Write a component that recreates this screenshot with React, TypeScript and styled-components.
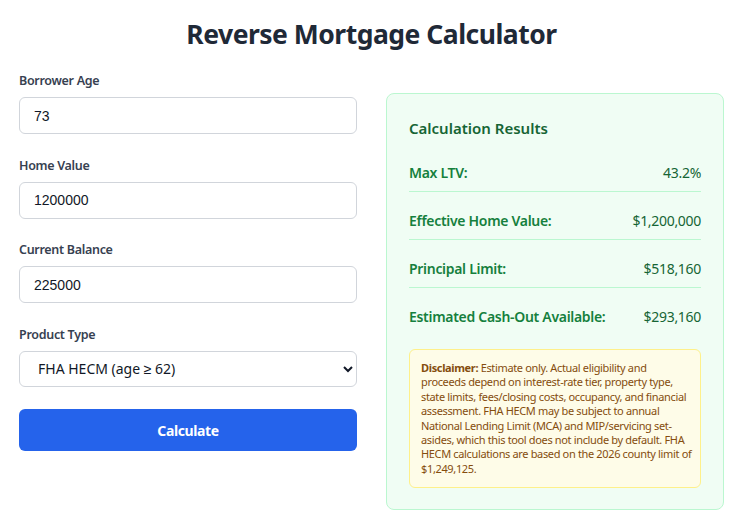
import React from "react";
import styled, { createGlobalStyle } from "styled-components";

const Global = createGlobalStyle`
  html, body { margin: 0; padding: 0; background: #ffffff; }
  body { font-family: "Noto Sans", "Open Sans", sans-serif; color: #1f2937; }
  * { box-sizing: border-box; }
`;

const Page = styled.div`
  padding: 0 12px 0 19px;
`;

const Title = styled.h1`
  margin: 0;
  padding-top: 17px;
  height: 72px;
  font-size: 26.5px;
  line-height: 34px;
  font-weight: 700;
  letter-spacing: -0.5px;
  text-align: center;
  color: #1f2937;
`;

const Grid = styled.div`
  display: grid;
  grid-template-columns: 338px 338px;
  column-gap: 29px;
  align-items: start;
`;

const Form = styled.div`
  display: flex;
  flex-direction: column;
`;

const Field = styled.div`
  display: flex;
  flex-direction: column;
  gap: 7px;
  margin-bottom: 22.6px;
`;

const Label = styled.label`
  font-size: 12.5px;
  line-height: 18px;
  font-weight: 600;
  letter-spacing: -0.3px;
  color: #374151;
`;

const Input = styled.input`
  height: 37px;
  width: 100%;
  padding: 0 14px;
  border: 1px solid #d1d5db;
  border-radius: 6px;
  font-family: "Liberation Sans", Arial, sans-serif;
  font-size: 14px;
  color: #111827;
  background: #fff;
  outline: none;
`;

const Select = styled.select`
  height: 36px;
  width: 100%;
  padding: 0 10px 0 14px;
  border: 1px solid #d1d5db;
  border-radius: 6px;
  font-family: "Noto Sans", sans-serif;
  font-size: 14px;
  color: #111827;
  background: #fff;
  outline: none;
`;

const Button = styled.button`
  height: 42px;
  width: 100%;
  border: none;
  border-radius: 6px;
  background: #2563eb;
  color: #fff;
  font-family: "Noto Sans", sans-serif;
  font-size: 14px;
  font-weight: 700;
  letter-spacing: -0.4px;
  cursor: pointer;
`;

const Panel = styled.section`
  margin-top: 21px;
  padding: 23px 22px 21px;
  background: #f0fdf4;
  border: 1px solid #bbf7d0;
  border-radius: 8px;
`;

const PanelTitle = styled.h2`
  margin: 0 0 16px;
  font-size: 15px;
  line-height: 22px;
  font-weight: 600;
  color: #166534;
`;

const Row = styled.div<{ $last?: boolean }>`
  display: flex;
  justify-content: space-between;
  align-items: center;
  padding: 8px 0;
  margin-bottom: ${(p) => (p.$last ? "13px" : "11px")};
  border-bottom: 1px solid ${(p) => (p.$last ? "transparent" : "#bbf7d0")};
  font-size: 14px;
  line-height: 20px;
  letter-spacing: -0.3px;
`;

const RowLabel = styled.span`
  font-weight: 600;
  color: #15803d;
`;

const RowValue = styled.span`
  color: #166534;
`;

const Disclaimer = styled.div`
  padding: 11px;
  background: #fefce8;
  border: 1px solid #fef08a;
  border-radius: 6px;
  font-size: 11px;
  line-height: 14.4px;
  letter-spacing: -0.35px;
  color: #854d0e;
`;

const Line = styled.span`
  display: block;
  white-space: nowrap;
`;

const results = [
  { label: "Max LTV:", value: "43.2%" },
  { label: "Effective Home Value:", value: "$1,200,000" },
  { label: "Principal Limit:", value: "$518,160" },
  { label: "Estimated Cash-Out Available:", value: "$293,160" },
];

const disclaimerLines = [
  "proceeds depend on interest-rate tier, property type,",
  "state limits, fees/closing costs, occupancy, and financial",
  "assessment. FHA HECM may be subject to annual",
  "National Lending Limit (MCA) and MIP/servicing set-",
  "asides, which this tool does not include by default. FHA",
  "HECM calculations are based on the 2026 county limit of",
  "$1,249,125.",
];

export default function App() {
  return (
    <Page>
      <Global />
      <Title>Reverse Mortgage Calculator</Title>
      <Grid>
        <Form>
          <Field>
            <Label>Borrower Age</Label>
            <Input defaultValue="73" />
          </Field>
          <Field>
            <Label>Home Value</Label>
            <Input defaultValue="1200000" />
          </Field>
          <Field>
            <Label>Current Balance</Label>
            <Input defaultValue="225000" />
          </Field>
          <Field>
            <Label>Product Type</Label>
            <Select defaultValue="fha">
              <option value="fha">FHA HECM (age ≥ 62)</option>
              <option value="prop">Proprietary</option>
            </Select>
          </Field>
          <Button>Calculate</Button>
        </Form>
        <Panel>
          <PanelTitle>Calculation Results</PanelTitle>
          {results.map((r, i) => (
            <Row key={r.label} $last={i === results.length - 1}>
              <RowLabel>{r.label}</RowLabel>
              <RowValue>{r.value}</RowValue>
            </Row>
          ))}
          <Disclaimer>
            <Line>
              <strong>Disclaimer:</strong> Estimate only. Actual eligibility and
            </Line>
            {disclaimerLines.map((l) => (
              <Line key={l}>{l}</Line>
            ))}
          </Disclaimer>
        </Panel>
      </Grid>
    </Page>
  );
}
